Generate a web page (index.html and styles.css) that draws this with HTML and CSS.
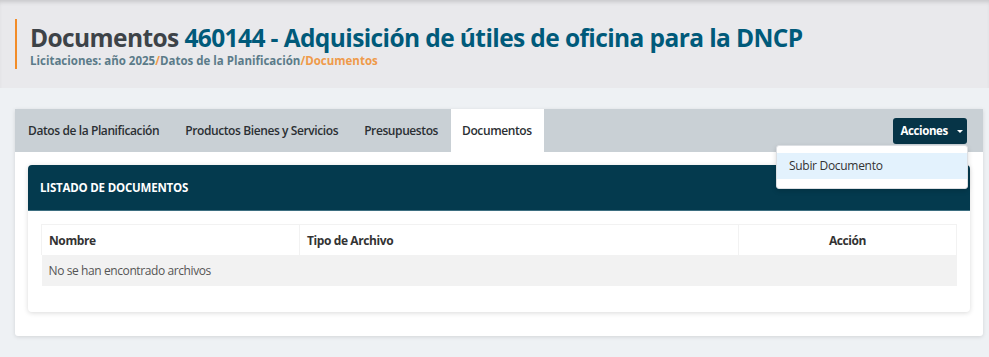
FILE: index.html
```html
<!DOCTYPE html>
<html lang="es">
<head>
	<meta charset="UTF-8">
	<title>Documentos</title>
	<link rel="stylesheet" href="styles.css">
</head>
<body>
	<div class="page-header">
		<div class="title-block">
			<h1><span class="muted">Documentos</span> 460144 - Adquisición de útiles de oficina para la DNCP</h1>
			<div class="crumbs">
				<span>Licitaciones: año 2025</span><span class="sep">/</span><span>Datos de la Planificación</span><span class="sep">/</span><span class="current">Documentos</span>
			</div>
		</div>
	</div>
	<div class="content">
		<div class="panel">
			<div class="tabbar">
				<ul class="tabs">
					<li>Datos de la Planificación</li>
					<li>Productos Bienes y Servicios</li>
					<li>Presupuestos</li>
					<li class="active">Documentos</li>
				</ul>
				<div class="actions">
					<button class="btn-acciones">Acciones <span class="caret"></span></button>
					<div class="menu">
						<div class="menu-item">Subir Documento</div>
					</div>
				</div>
			</div>
			<div class="panel-body">
				<div class="card">
					<div class="card-head">LISTADO DE DOCUMENTOS</div>
					<div class="card-body">
						<table class="docs">
							<thead>
								<tr>
									<th class="c-nombre">Nombre</th>
									<th class="c-tipo">Tipo de Archivo</th>
									<th class="c-accion">Acción</th>
								</tr>
							</thead>
							<tbody>
								<tr>
									<td colspan="3">No se han encontrado archivos</td>
								</tr>
							</tbody>
						</table>
					</div>
				</div>
			</div>
		</div>
	</div>
</body>
</html>
```

FILE: styles.css
```css
body{
	margin:0;
	background:#eef1f4;
	font-family:"Open Sans","Noto Sans",sans-serif;
	color:#333;
}
.page-header{
	height:88px;
	background:#e9e9ec;
	box-shadow:inset 0 4px 4px -2px rgba(0,0,0,0.15);
	padding:19px 0 0 15px;
	box-sizing:border-box;
}
.title-block{
	border-left:2px solid #f28c28;
	padding-left:13px;
	height:50px;
}
h1{
	margin:0;
	padding-top:6px;
	font-size:24.5px;
	line-height:26px;
	font-weight:700;
	color:#005a7a;
	letter-spacing:-0.6px;
}
h1 .muted{
	color:#3d4348;
}
.crumbs{
	font-size:11.5px;
	font-weight:700;
	color:#5b7b89;
	line-height:16px;
	margin-top:2px;
}
.crumbs .sep,
.crumbs .current{
	color:#ef9a4a;
}
.content{
	padding:21px 6px 20px 15px;
}
.panel{
	background:#fff;
	box-shadow:0 1px 4px rgba(0,0,0,0.12);
	border-radius:0 0 3px 3px;
}
.tabbar{
	display:flex;
	justify-content:space-between;
	align-items:center;
	background:#c9d0d5;
	height:43px;
	position:relative;
}
.tabs{
	list-style:none;
	margin:0;
	padding:0;
	display:flex;
	height:100%;
}
.tabs li{
	font-size:12px;
	font-weight:600;
	color:#2b2f33;
	padding:0 13px;
	line-height:43px;
	letter-spacing:-0.4px;
}
.tabs li.active{
	background:#fff;
	padding:0 12px 0 11px;
}
.actions{
	margin-right:16px;
	position:relative;
}
.btn-acciones{
	background:#063447;
	color:#fff;
	border:0;
	border-radius:3px;
	font-family:inherit;
	font-size:11.5px;
	font-weight:700;
	letter-spacing:-0.4px;
	height:26px;
	width:74px;
	padding:0 0 0 4px;
	cursor:pointer;
}
.caret{
	display:inline-block;
	width:0;
	height:0;
	border-left:3px solid transparent;
	border-right:3px solid transparent;
	border-top:3px solid #fff;
	vertical-align:middle;
	margin-left:7px;
}
.menu{
	position:absolute;
	right:-1px;
	top:27px;
	width:190px;
	background:#fff;
	border:1px solid #dcdfe3;
	border-radius:3px;
	box-shadow:0 2px 5px rgba(0,0,0,0.15);
	padding:7px 0 9px;
	z-index:5;
}
.menu-item{
	background:#e3f2fd;
	font-size:12px;
	letter-spacing:-0.3px;
	color:#333;
	padding:0 12px;
	line-height:26px;
}
.panel-body{
	padding:13px 13px 24px 13px;
}
.card{
	border-radius:4px;
	box-shadow:0 1px 5px rgba(0,0,0,0.15);
	background:#fff;
	overflow:hidden;
}
.card-head{
	background:#043a4e;
	color:#fff;
	font-size:11.5px;
	font-weight:700;
	height:45px;
	line-height:46px;
	padding-left:12px;
	border-bottom:1px solid #3d6e80;
	letter-spacing:-0.2px;
}
.card-body{
	padding:13px 13px 26px 13px;
}
.docs{
	width:100%;
	border-collapse:collapse;
	font-size:12px;
	letter-spacing:-0.4px;
}
.docs th{
	text-align:left;
	font-weight:700;
	color:#333;
	height:30px;
	padding:0 7px;
	border:1px solid #f2f2f2;
	border-bottom:0;
}
.docs .c-nombre{
	width:243px;
}
.docs .c-tipo{
	width:424px;
}
.docs .c-accion{
	text-align:center;
}
.docs td{
	background:#f2f2f2;
	color:#555;
	height:31px;
	padding:0 7px;
}
```
